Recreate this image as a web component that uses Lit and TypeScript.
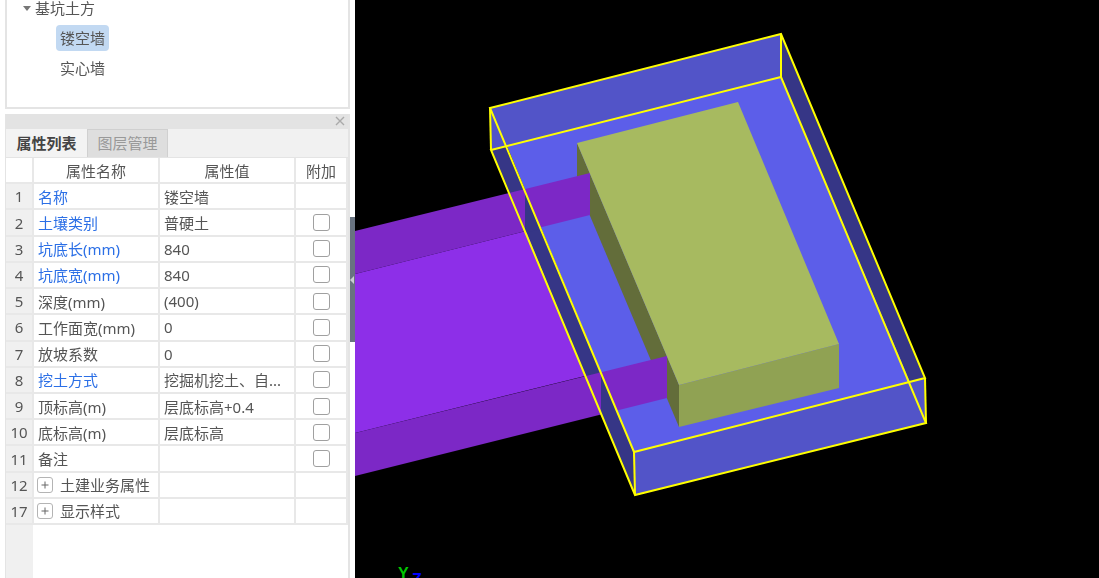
import { LitElement, html, css, svg } from "lit";
import { customElement } from "lit/decorators.js";

type Row = { n: number; name: string; blue?: boolean; value?: string; check?: boolean; group?: boolean };

const ROWS: Row[] = [
  { n: 1, name: "名称", blue: true, value: "镂空墙" },
  { n: 2, name: "土壤类别", blue: true, value: "普硬土", check: true },
  { n: 3, name: "坑底长(mm)", blue: true, value: "840", check: true },
  { n: 4, name: "坑底宽(mm)", blue: true, value: "840", check: true },
  { n: 5, name: "深度(mm)", value: "(400)", check: true },
  { n: 6, name: "工作面宽(mm)", value: "0", check: true },
  { n: 7, name: "放坡系数", value: "0", check: true },
  { n: 8, name: "挖土方式", blue: true, value: "挖掘机挖土、自...", check: true },
  { n: 9, name: "顶标高(m)", value: "层底标高+0.4", check: true },
  { n: 10, name: "底标高(m)", value: "层底标高", check: true },
  { n: 11, name: "备注", check: true },
  { n: 12, name: "土建业务属性", group: true },
  { n: 17, name: "显示样式", group: true },
];

const SHAPES: [string, string][] = [
  ["wall-dark", "490,108 634,452 635,495 491,150"],
  ["wall-dark", "781,34 925,378 926,423 781,77"],
  ["floor", "507,146 781,77 910,382 634,452"],
  ["olive", "577,143 679,385 679,427 577,185"],
  ["purple-dark", "355,231 590,173 590,215 355,274"],
  ["purple-dark", "355,433 667,356 667,398 355,476"],
  ["purple", "355,274 526,231 585,376 355,433"],
  ["wall-dark", "525,192 525,233 541,229"],
  ["wall-dark", "601,373 601,415 617,411"],
  ["green-front", "679,385 839,344 839,388 679,427"],
  ["green-top", "577,143 738,102 839,344 679,385"],
  ["wall", "490,108 781,34 781,77 491,150"],
  ["wall", "634,452 925,378 926,423 635,495"],
];

const EDGES = [
  "490,108 781,34 925,378 634,452",
  "491,150 781,77 926,423 635,495",
];
const POSTS = [
  [490, 108, 491, 150],
  [781, 34, 781, 77],
  [925, 378, 926, 423],
  [634, 452, 635, 495],
];

@customElement("app-root")
export class AppRoot extends LitElement {
  static styles = css`
    :host {
      display: flex;
      width: 1099px;
      height: 578px;
      overflow: hidden;
      background: #fff;
      font-family: "Noto Sans", "Noto Sans CJK SC", sans-serif;
      font-size: 15px;
      color: #555;
    }
    .side {
      width: 355px;
      flex: none;
      display: flex;
      flex-direction: column;
      gap: 5px;
      padding-left: 5px;
      box-sizing: border-box;
      position: relative;
      height: 578px;
      filter: blur(0.35px);
    }
    .tree {
      width: 345px;
      height: 109px;
      flex: none;
      box-sizing: border-box;
      border: 2px solid #e4e4e4;
      border-top: none;
      display: flex;
      flex-direction: column;
      padding-left: 16px;
    }
    .tree-head {
      display: flex;
      align-items: center;
      gap: 4px;
      height: 15px;
    }
    .caret {
      width: 0;
      height: 0;
      border-left: 4px solid transparent;
      border-right: 4px solid transparent;
      border-top: 5px solid #777;
      margin-top: 1px;
    }
    .leaf {
      align-self: flex-start;
      margin: 10px 0 0 33px;
      padding: 0 4px;
      height: 26px;
      line-height: 26px;
      border-radius: 4px;
    }
    .leaf + .leaf {
      margin-top: 4px;
    }
    .leaf.sel {
      background: #c2d9f2;
    }
    .panel {
      width: 345px;
      flex: 1;
      box-sizing: border-box;
      border-right: 2px solid #e4e4e4;
      border-left: 1px solid #e4e4e4;
      display: flex;
      flex-direction: column;
      min-height: 0;
    }
    .title {
      height: 15px;
      flex: none;
      background: #e3e3e3;
      display: flex;
      justify-content: flex-end;
      align-items: center;
      padding: 0 3px 1px 0;
      box-sizing: border-box;
    }
    .tabs {
      height: 28px;
      flex: none;
      display: flex;
      background: #f1f1f1;
      border-bottom: 1px solid #e4e4e4;
      box-sizing: content-box;
    }
    .tab {
      width: 81px;
      box-sizing: border-box;
      text-align: center;
      line-height: 28px;
    }
    .tab.on {
      background: #f3f3f3;
      color: #444;
      font-weight: 700;
    }
    .tab.off {
      background: #dedede;
      border: 1px solid #d0d0d0;
      border-bottom: none;
      color: #999;
      line-height: 27px;
    }
    .grid {
      flex: 1;
      display: grid;
      grid-template-columns: 28px 126px 136px 52px;
      grid-auto-rows: 26.23px;
      align-content: start;
      background: linear-gradient(#f0f0f0, #f0f0f0) no-repeat 0 0 / 27px 100%;
      min-height: 0;
    }
    .c {
      box-sizing: border-box;
      border-right: 2px solid #e8e8e8;
      border-bottom: 2px solid #e8e8e8;
      display: flex;
      align-items: center;
      padding-left: 4px;
      white-space: nowrap;
      overflow: hidden;
      background: #fff;
    }
    .c.head {
      justify-content: center;
      padding-left: 0;
    }
    .c.num {
      background: #f0f0f0;
      justify-content: center;
      padding: 0;
    }
    .c.blue {
      color: #2b6fe6;
    }
    .c.box {
      justify-content: center;
      padding: 0;
    }
    .check {
      width: 17px;
      height: 17px;
      box-sizing: border-box;
      border: 1.5px solid #a0a0a0;
      border-radius: 3px;
      background: #fff;
    }
    .plus {
      width: 16px;
      height: 16px;
      flex: none;
      box-sizing: border-box;
      border: 1px solid #b4b4b4;
      border-radius: 3px;
      margin: 0 7px 0 -1px;
      display: flex;
      align-items: center;
      justify-content: center;
    }
    .splitter {
      position: absolute;
      left: 350px;
      top: 217px;
      width: 5px;
      height: 125px;
      background: #687380;
      display: flex;
      align-items: center;
    }
    .splitter i {
      width: 0;
      height: 0;
      border-top: 4px solid transparent;
      border-bottom: 4px solid transparent;
      border-right: 4px solid #c9cdd2;
    }
    .view {
      flex: 1;
      background: #000;
      display: block;
    }
    .view svg {
      display: block;
    }
    .wall-dark { fill: #363686; }
    .floor { fill: #5c5ee9; }
    .olive { fill: #636d3a; }
    .purple { fill: #8d2fe8; }
    .purple-dark { fill: #7c28c6; }
    .green-front { fill: #90a253; }
    .green-top { fill: #a7ba60; }
    .wall { fill: #5254c8; }
    .edge {
      fill: none;
      stroke: #ffff00;
      stroke-width: 2;
      stroke-linejoin: miter;
    }
    .ax {
      font-family: "Liberation Sans", sans-serif;
      font-size: 16px;
      font-weight: 700;
    }
    .ax.y { fill: #00c800; }
    .ax.z { fill: #0000ff; }
  `;

  private renderRow(r: Row) {
    return html`
      <div class="c num">${r.n}</div>
      <div class="c ${r.blue ? "blue" : ""}">
        ${r.group
          ? html`<span class="plus"
              ><svg width="8" height="8" viewBox="0 0 8 8">
                <path d="M4 0.5V7.5M0.5 4H7.5" stroke="#666" stroke-width="1" fill="none" /></svg
            ></span>`
          : ""}${r.name}
      </div>
      <div class="c">${r.value ?? ""}</div>
      <div class="c box">${r.check ? html`<span class="check"></span>` : ""}</div>
    `;
  }

  render() {
    return html`
      <div class="side">
        <div class="tree">
          <div class="tree-head"><span class="caret"></span>基坑土方</div>
          <div class="leaf sel">镂空墙</div>
          <div class="leaf">实心墙</div>
        </div>
        <div class="panel">
          <div class="title">
            <svg width="10" height="10" viewBox="0 0 10 10">
              <path d="M1 1L9 9M9 1L1 9" stroke="#aaa" stroke-width="1.4" fill="none" />
            </svg>
          </div>
          <div class="tabs">
            <div class="tab on">属性列表</div>
            <div class="tab off">图层管理</div>
          </div>
          <div class="grid">
            <div class="c head"></div>
            <div class="c head">属性名称</div>
            <div class="c head">属性值</div>
            <div class="c head">附加</div>
            ${ROWS.map((r) => this.renderRow(r))}
          </div>
        </div>
        <div class="splitter"><i></i></div>
      </div>
      <div class="view">
        <svg width="744" height="578" viewBox="355 0 744 578">
          ${SHAPES.map(([c, p]) => svg`<polygon class=${c} points=${p}></polygon>`)}
          ${EDGES.map((p) => svg`<polygon class="edge" points=${p}></polygon>`)}
          ${POSTS.map(
            ([x1, y1, x2, y2]) => svg`<line class="edge" x1=${x1} y1=${y1} x2=${x2} y2=${y2}></line>`
          )}
          <text class="ax y" x="398" y="579">Y</text>
          <text class="ax z" x="412" y="585">Z</text>
        </svg>
      </div>
    `;
  }
}
